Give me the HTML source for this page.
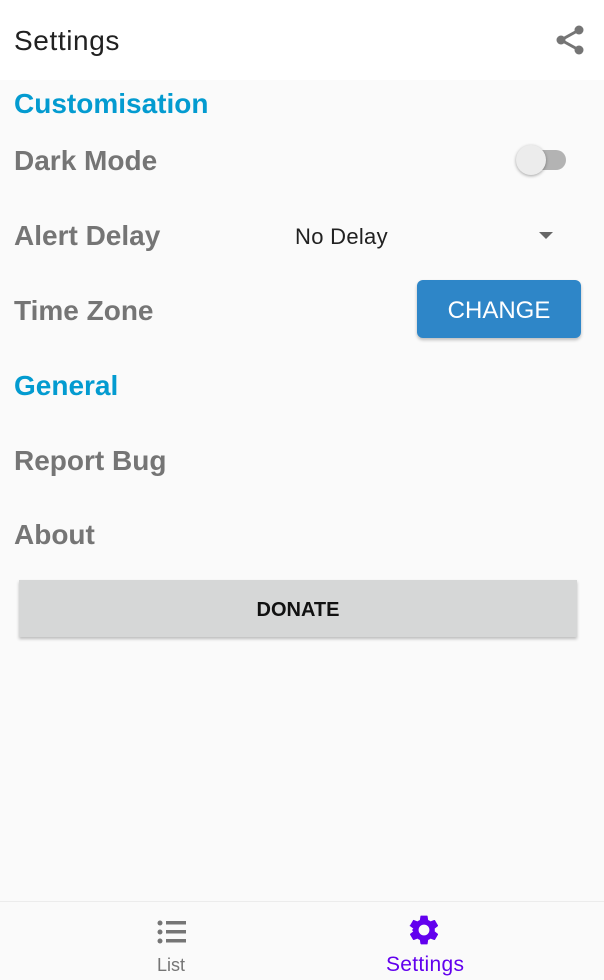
<!DOCTYPE html>
<html><head><style>
body{margin:0;width:604px;height:980px;background:#fafafa;font-family:"Liberation Sans",sans-serif;position:relative;overflow:hidden}
.a{position:absolute;white-space:nowrap}
.h{color:#039bd0;font-weight:bold;font-size:28px}
.l{color:#757575;font-weight:bold;font-size:28px}
</style></head><body>
<div class="a" style="left:0;top:0;width:604px;height:80px;background:#fff"></div>
<div class="a" style="left:14px;top:25px;font-size:28px;color:#212121;letter-spacing:0.6px">Settings</div>
<svg class="a" style="left:554px;top:24px" width="32" height="32" viewBox="0 0 32 32"><g fill="#757575"><circle cx="25" cy="6" r="4.5"/><circle cx="7" cy="16" r="4.5"/><circle cx="25" cy="26" r="4.5"/></g><path d="M25 6L7 16L25 26" stroke="#757575" stroke-width="3" fill="none"/></svg>
<div class="a h" style="left:14px;top:88px">Customisation</div>
<div class="a l" style="left:14px;top:145px">Dark Mode</div>
<div class="a" style="left:520px;top:150px;width:46px;height:20px;border-radius:10px;background:#b3b3b3"></div>
<div class="a" style="left:516px;top:145px;width:30px;height:30px;border-radius:50%;background:#ececec;box-shadow:0 1px 3px rgba(0,0,0,.35)"></div>
<div class="a l" style="left:14px;top:220px">Alert Delay</div>
<div class="a" style="left:295px;top:224px;font-size:22px;color:#212121;letter-spacing:0.3px">No Delay</div>
<div class="a" style="left:539px;top:232px;width:0;height:0;border-left:7px solid transparent;border-right:7px solid transparent;border-top:7px solid #666"></div>
<div class="a l" style="left:14px;top:295px">Time Zone</div>
<div class="a" style="left:417px;top:280px;width:164px;height:58px;background:#2e86c8;border-radius:6px;box-shadow:0 2px 3px rgba(0,0,0,.25);color:#fff;font-size:24px;line-height:62px;text-align:center">CHANGE</div>
<div class="a h" style="left:14px;top:370px">General</div>
<div class="a l" style="left:14px;top:445px">Report Bug</div>
<div class="a l" style="left:14px;top:519px">About</div>
<div class="a" style="left:19px;top:580px;width:558px;height:57px;background:#d6d7d7;box-shadow:0 2px 3px rgba(0,0,0,.25);font-weight:bold;font-size:20px;line-height:60px;text-align:center;color:#111">DONATE</div>
<div class="a" style="left:0;top:901px;width:604px;height:1px;background:#ececec"></div>
<svg class="a" style="left:156px;top:919px" width="32" height="28" viewBox="0 0 32 28"><g fill="#757575"><circle cx="4" cy="4" r="2.5"/><circle cx="4" cy="13" r="2.5"/><circle cx="4" cy="22" r="2.5"/><rect x="10" y="2" width="20" height="3.5"/><rect x="10" y="11" width="20" height="3.5"/><rect x="10" y="20" width="20" height="3.5"/></g></svg>
<div class="a" style="left:157px;top:955px;font-size:18px;color:#757575">List</div>
<svg class="a" style="left:406px;top:912px" width="36" height="36" viewBox="0 0 24 24"><path fill="#6200ee" d="M19.14 12.94c.04-.3.06-.61.06-.94 0-.32-.02-.64-.07-.94l2.03-1.58a.49.49 0 0 0 .12-.61l-1.92-3.32a.49.49 0 0 0-.59-.22l-2.39.96c-.5-.38-1.03-.7-1.620-.94l-.36-2.54a.48.48 0 0 0-.48-.41h-3.84c-.24 0-.43.17-.47.41l-.36 2.54c-.59.24-1.13.57-1.62.94l-2.39-.96a.48.48 0 0 0-.59.22L2.74 8.870c-.12.21-.8.47.12.61l2.03 1.58c-.5.3-.7.63-.7.94s.2.64.7.94l-2.03 1.58a.49.49 0 0 0-.12.61l1.92 3.32c.12.22.37.29.59.22l2.39-.96c.5.38 1.03.7 1.62.94l.36 2.54c.5.24.24.41.48.41h3.84c.24 0 .44-.17.47-.41l.36-2.54c.59-.24 1.13-.56 1.62-.94l2.39.96c.22.08.47 0 .59-.22l1.92-3.32a.49.49 0 0 0-.12-.61l-2.010-1.58zM12 15.6A3.6 3.6 0 1 1 12 8.4a3.6 3.6 0 0 1 0 7.2z"/></svg>
<div class="a" style="left:386px;top:953px;font-size:21px;color:#6200ee;letter-spacing:0.3px">Settings</div>
</body></html>
